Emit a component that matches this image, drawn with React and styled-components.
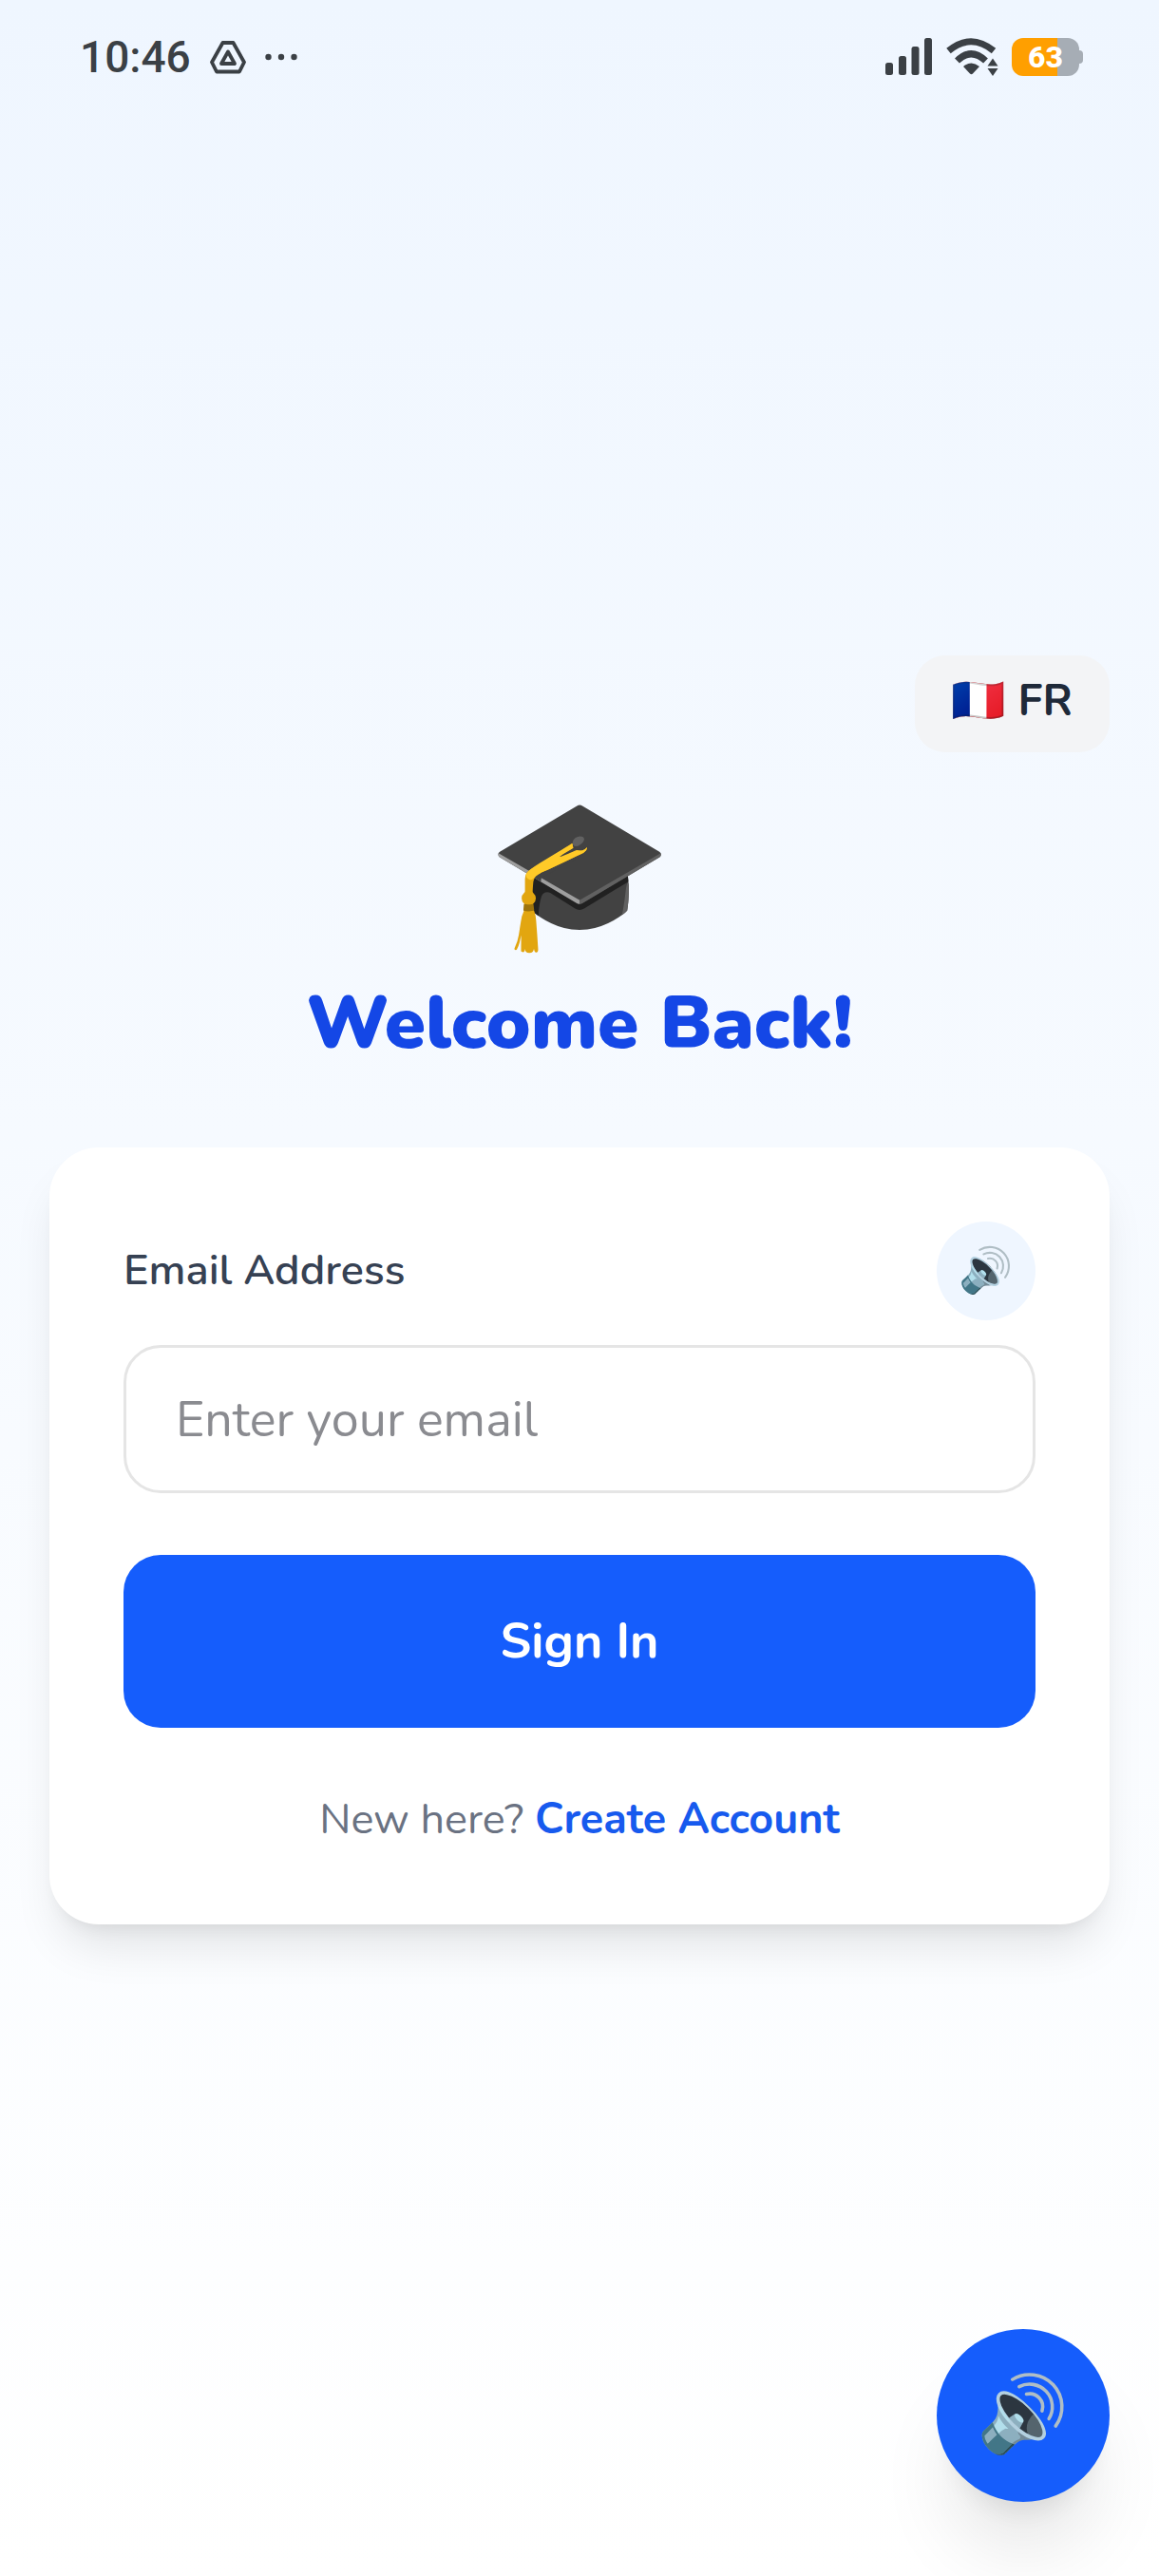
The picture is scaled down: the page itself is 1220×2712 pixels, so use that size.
import React, { useState } from "react";
import styled, { createGlobalStyle } from "styled-components";

const GlobalStyle = createGlobalStyle`
  *, *::before, *::after { box-sizing: border-box; }
  body { margin: 0; }
  button, input { font: inherit; }
`;

const Screen = styled.div`
  min-height: 100vh;
  display: flex;
  flex-direction: column;
  background: linear-gradient(to bottom, #eff6ff, #ffffff);
  font-family: Nunito, "Open Sans", "Noto Color Emoji", sans-serif;
  font-size: 45px;
  line-height: 64px;
  color: #1e2939;
`;

const StatusBar = styled.header`
  height: 120px;
  padding: 0 80px 0 84px;
  display: flex;
  align-items: center;
  justify-content: space-between;
  color: #3b4045;
`;

const StatusGroup = styled.div`
  display: flex;
  align-items: center;
  gap: ${(p) => p.$gap}px;
`;

const Clock = styled.time`
  font-family: Roboto, sans-serif;
  font-size: 46px;
  font-weight: 500;
  line-height: 52px;
`;

const Battery = styled.div`
  display: flex;
  align-items: center;
`;

const BatteryBody = styled.div`
  width: 71px;
  height: 40px;
  border-radius: 12px;
  display: grid;
  place-items: center;
  background: linear-gradient(to right, #ff9f00 68%, #a6adb5 68%);
  color: #ffffff;
  font-family: Roboto, sans-serif;
  font-size: 32px;
  font-weight: 800;
  line-height: 40px;
`;

const BatteryTip = styled.div`
  width: 4px;
  height: 14px;
  border-radius: 0 4px 4px 0;
  background: #a6adb5;
`;

const Main = styled.main`
  flex: 1;
  display: flex;
  flex-direction: column;
  justify-content: center;
  padding: 0 52px 116px;
`;

const LanguageButton = styled.button`
  align-self: flex-end;
  height: 102px;
  padding: 0 39px 6px;
  border: 0;
  border-radius: 32px;
  background: #f3f4f6;
  color: #1e2939;
  font-size: 46px;
  font-weight: 700;
  line-height: 64px;
  cursor: pointer;
`;

const Hero = styled.div`
  display: flex;
  flex-direction: column;
  align-items: center;
  margin: 52px 0 78px;
`;

const HeroEmoji = styled.span`
  font-size: 156px;
  line-height: 156px;
`;

const Title = styled.h1`
  margin: 26px 0 0;
  color: #1447e6;
  font-size: 78px;
  font-weight: 900;
  line-height: 104px;
`;

const Card = styled.form`
  display: flex;
  flex-direction: column;
  padding: 78px;
  border-radius: 52px;
  background: #ffffff;
  box-shadow: 0 32px 48px -10px rgba(0, 0, 0, 0.1), 0 13px 20px -13px rgba(0, 0, 0, 0.1);
`;

const LabelRow = styled.div`
  display: flex;
  align-items: center;
  justify-content: space-between;
  margin-bottom: 26px;
`;

const Label = styled.label`
  color: #364153;
  font-weight: 600;
`;

const RoundButton = styled.button`
  width: ${(p) => p.$size}px;
  height: ${(p) => p.$size}px;
  padding: 0;
  display: flex;
  align-items: center;
  justify-content: center;
  border: 0;
  border-radius: 50%;
  background: #eff6ff;
  font-size: 46px;
  line-height: 60px;
  cursor: pointer;
`;

const FloatingButton = styled(RoundButton)`
  position: fixed;
  right: 52px;
  bottom: 78px;
  background: #155dfc;
  font-size: 78px;
  line-height: 104px;
  box-shadow: 0 65px 81px -16px rgba(0, 0, 0, 0.1), 0 26px 32px -20px rgba(0, 0, 0, 0.1);
`;

const EmailInput = styled.input`
  width: 100%;
  height: 156px;
  padding: 0 52px;
  border: 3px solid #e5e5e5;
  border-radius: 39px;
  outline: none;
  background: #ffffff;
  color: #1e2939;
  font-size: 52px;
  &::placeholder { color: #8a8b90; opacity: 1; }
`;

const SubmitButton = styled.button`
  height: 182px;
  margin: 65px 0;
  border: 0;
  border-radius: 39px;
  background: #155dfc;
  color: #ffffff;
  font-size: 52px;
  font-weight: 700;
  cursor: pointer;
`;

const SignUp = styled.p`
  margin: 0;
  color: #6a7282;
  text-align: center;
`;

const SignUpLink = styled.a`
  color: #175aee;
  font-weight: 700;
  text-decoration: none;
`;

const DriveIcon = () => (
  <svg width="38" height="35" viewBox="0 0 38 35" fill="none" stroke="currentColor" strokeWidth="3.8" strokeLinejoin="round">
    <path d="M13.5 2h11L36 22.500l-5 10H7l-5-10z" />
    <path d="M19 11.500l7 12.500H12z" />
  </svg>
);

const MoreIcon = () => (
  <svg width="34" height="8" viewBox="0 0 34 8" fill="currentColor">
    <circle cx="3.500" cy="4" r="3.200" />
    <circle cx="17" cy="4" r="3.200" />
    <circle cx="30.500" cy="4" r="3.200" />
  </svg>
);

const SignalIcon = () => (
  <svg width="50" height="40" viewBox="0 0 50 40" fill="currentColor">
    <rect x="0" y="26" width="8" height="13" rx="2.500" />
    <rect x="14" y="19" width="8" height="20" rx="2.500" />
    <rect x="27.500" y="9" width="8" height="30" rx="2.500" />
    <rect x="41" y="0" width="8" height="39" rx="2.500" />
  </svg>
);

const WifiIcon = () => (
  <svg width="55" height="40" viewBox="0 0 55 40">
    <g fill="none" stroke="currentColor" strokeWidth="7">
      <path d="M2.500 13.500Q26 -6 50 13.500" />
      <path d="M11.500 24Q26 9.500 41.500 24" />
    </g>
    <path d="M18 30q8.500-7 17 0l-7 7.500q-1.500 1.500-3 0z" fill="currentColor" />
    <path d="M49 21.500l5.500 8h-11zM49 40l5.500-8h-11z" fill="currentColor" />
  </svg>
);

export default function App() {
  const [email, setEmail] = useState("");
  return (
    <Screen>
      <GlobalStyle />
      <StatusBar>
        <StatusGroup $gap={20}>
          <Clock>10:46</Clock>
          <DriveIcon />
          <MoreIcon />
        </StatusGroup>
        <StatusGroup $gap={14}>
          <SignalIcon />
          <WifiIcon />
          <Battery>
            <BatteryBody>63</BatteryBody>
            <BatteryTip />
          </Battery>
        </StatusGroup>
      </StatusBar>
      <Main>
        <LanguageButton type="button">🇫🇷 FR</LanguageButton>
        <Hero>
          <HeroEmoji>🎓</HeroEmoji>
          <Title>Welcome Back!</Title>
        </Hero>
        <Card onSubmit={(e) => e.preventDefault()}>
          <LabelRow>
            <Label htmlFor="email">Email Address</Label>
            <RoundButton type="button" $size={104} aria-label="Listen to the label">🔊</RoundButton>
          </LabelRow>
          <EmailInput
            id="email"
            type="email"
            placeholder="Enter your email"
            value={email}
            onChange={(e) => setEmail(e.target.value)}
          />
          <SubmitButton type="submit">Sign In</SubmitButton>
          <SignUp>
            New here? <SignUpLink href="#create-account">Create Account</SignUpLink>
          </SignUp>
        </Card>
      </Main>
      <FloatingButton type="button" $size={182} aria-label="Read the page aloud">🔊</FloatingButton>
    </Screen>
  );
}
